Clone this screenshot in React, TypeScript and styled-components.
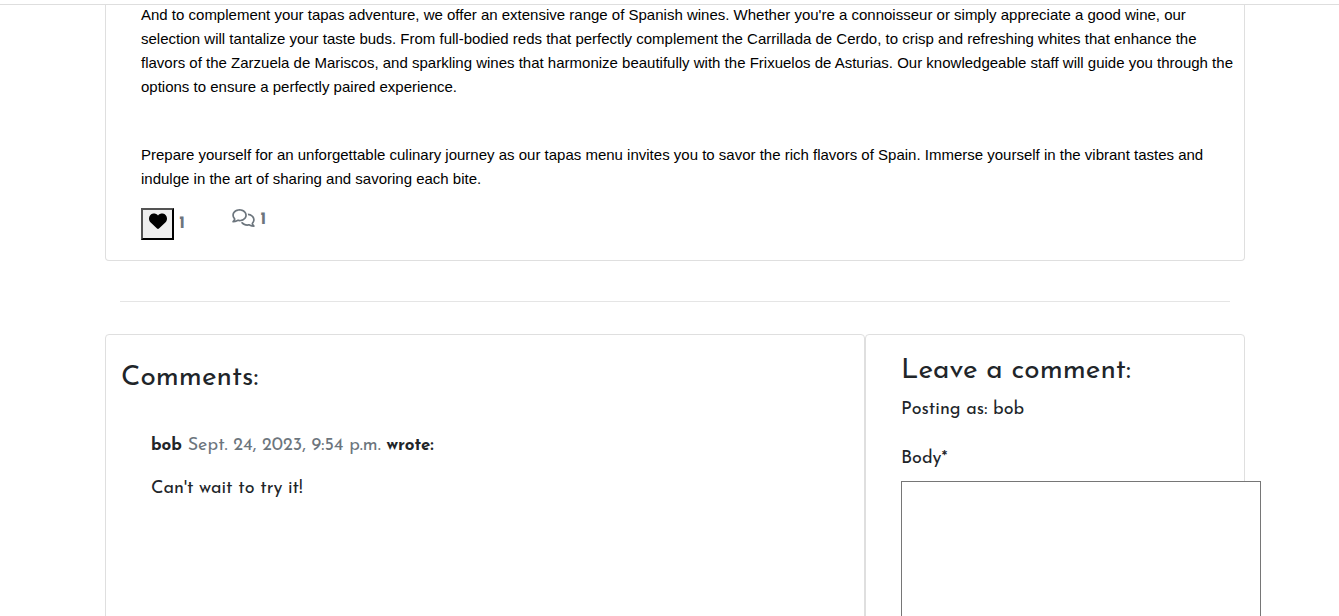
import React from 'react';
import styled, { createGlobalStyle } from 'styled-components';
import { FaHeart, FaRegComments } from 'react-icons/fa6';

const GlobalStyle = createGlobalStyle`
  *, *::before, *::after { box-sizing: border-box; }
  body {
    margin: 0;
    background: #fff;
    color: #212529;
    font-family: 'Josefin Sans', Lato, sans-serif;
    font-size: 18px;
    line-height: 24px;
  }
`;

const Header = styled.header`
  position: fixed;
  inset: 0 0 auto 0;
  height: 5px;
  background: #fff;
  border-bottom: 1px solid #dedede;
`;

const Page = styled.main`
  padding-left: 11px;
`;

const Container = styled.div`
  max-width: 1140px;
  margin: 0 auto;
`;

const Card = styled.section`
  background: #fff;
  border: 1px solid #dfdfdf;
  border-radius: 4px;
`;

const PostCard = styled(Card)`
  border-top: 0;
  border-radius: 0 0 4px 4px;
  padding: 3px 8px 20px 35px;
`;

const Paragraph = styled.p`
  margin: 0 0 44px;
  color: #000;
  font-family: 'Liberation Sans', Arial, sans-serif;
  font-size: 15px;
  line-height: 24px;

  &:last-of-type { margin-bottom: 17px; }
`;

const Reactions = styled.div`
  display: flex;
  align-items: flex-start;
  gap: 47px;
  color: #6c757d;
  font-weight: 700;
`;

const Reaction = styled.div`
  display: flex;
  align-items: center;
  gap: 5px;
`;

const LikeButton = styled.button`
  display: flex;
  align-items: flex-start;
  justify-content: center;
  width: 33px;
  height: 32px;
  padding: 2px 0;
  border: 2px outset #000;
  background: #efefef;
  color: #000;
  font-size: 18px;
`;

const CommentsIcon = styled(FaRegComments)`
  width: 23px;
  margin-bottom: 4px;
  font-size: 18px;
`;

const Divider = styled.hr`
  height: 1px;
  margin: 40px 15px 32px;
  border: 0;
  background: #e5e5e5;
`;

const Columns = styled.div`
  display: grid;
  grid-template-columns: 2fr 1fr;
`;

const CommentsCard = styled(Card)`
  padding: 26px 15px;
`;

const FormCard = styled(Card)`
  min-width: 0;
  padding: 19px 35px 24px;
`;

const Heading = styled.h3`
  margin: 0 0 10px;
  font-size: 28px;
  font-weight: 400;
  line-height: 34px;
`;

const Comment = styled.article`
  padding: 29px 30px;
`;

const CommentLine = styled.p`
  margin: 0 0 19px;
`;

const Strong = styled.strong`
  font-size: 17px;
`;

const Muted = styled.span`
  color: #6c757d;
`;

const PostingAs = styled.p`
  margin: 0 0 25px;
`;

const Label = styled.label`
  display: block;
  margin-bottom: 10px;
`;

const BodyInput = styled.textarea`
  display: block;
  width: 360px;
  border: 1px solid #767676;
  background: #fff;
  font: inherit;
  resize: vertical;
`;

export default function App() {
  return (
    <>
      <GlobalStyle />
      <Header />
      <Page>
        <Container>
          <PostCard>
            <Paragraph>
              And to complement your tapas adventure, we offer an extensive range of Spanish wines. Whether you're a
              connoisseur or simply appreciate a good wine, our selection will tantalize your taste buds. From
              full-bodied reds that perfectly complement the Carrillada de Cerdo, to crisp and refreshing whites that
              enhance the flavors of the Zarzuela de Mariscos, and sparkling wines that harmonize beautifully with the
              Frixuelos de Asturias. Our knowledgeable staff will guide you through the options to ensure a perfectly
              paired experience.
            </Paragraph>
            <Paragraph>
              Prepare yourself for an unforgettable culinary journey as our tapas menu invites you to savor the rich
              flavors of Spain. Immerse yourself in the vibrant tastes and indulge in the art of sharing and savoring
              each bite.
            </Paragraph>
            <Reactions>
              <Reaction>
                <LikeButton type="button" aria-label="Like">
                  <FaHeart />
                </LikeButton>
                <span>1</span>
              </Reaction>
              <Reaction>
                <CommentsIcon />
                <span>1</span>
              </Reaction>
            </Reactions>
          </PostCard>
          <Divider />
          <Columns>
            <CommentsCard>
              <Heading>Comments:</Heading>
              <Comment>
                <CommentLine>
                  <Strong>bob</Strong> <Muted>Sept. 24, 2023, 9:54 p.m.</Muted> <Strong>wrote:</Strong>
                </CommentLine>
                <CommentLine>Can't wait to try it!</CommentLine>
              </Comment>
            </CommentsCard>
            <FormCard>
              <Heading>Leave a comment:</Heading>
              <form>
                <PostingAs>Posting as: bob</PostingAs>
                <Label htmlFor="body">Body*</Label>
                <BodyInput id="body" name="body" rows={10} required />
              </form>
            </FormCard>
          </Columns>
        </Container>
      </Page>
    </>
  );
}
